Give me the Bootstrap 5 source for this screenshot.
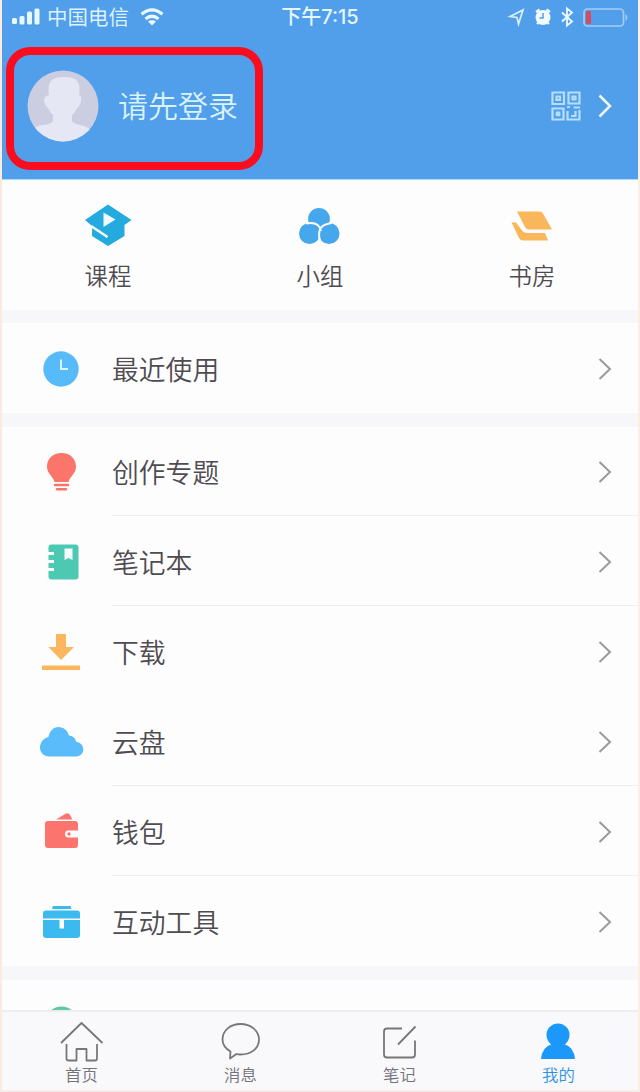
<!DOCTYPE html>
<html lang="zh-CN">
<head>
<meta charset="utf-8">
<meta name="viewport" content="width=device-width, initial-scale=1">
<title>我的</title>
<link href="https://cdn.jsdelivr.net/npm/bootstrap@5.3.0/dist/css/bootstrap.min.css" rel="stylesheet">
<style>
body{font-family:"Liberation Sans","Noto Sans CJK SC",sans-serif;color:#4e4c50;background:#fefdfe}
svg{display:block;flex:none;overflow:visible}
.screen{height:1092px;overflow:hidden;border-left:2px solid #fbeadd;border-right:2px solid #fbefe2;border-bottom:2px solid #f9e9ea}
.hero{height:180px;background:#519eea;color:#fff;border-bottom:1px solid #a9dcf6}
.status{height:33px;font-size:20.5px;line-height:33px}
.status .side{width:270px}
.clock{font-family:"Inter","Noto Sans CJK SC",sans-serif;font-size:20px;font-weight:500;color:#e4f6ff;white-space:nowrap;padding-top:1px}
.carrier{color:#dcf2ff;margin-left:5px;margin-right:11px;padding-top:1px}
.login{width:257px;height:123px;margin:14px 0 0 4px;border:8px solid #fa0d1f;border-radius:24px;padding:0 0 5px 13px}
.login-name{font-size:30px;font-weight:350;color:#d9f3ff;margin-left:19px;line-height:40px;padding-top:2px}
.quick{height:130px}
.quick-item{padding-top:22px;font-size:23.4px;font-weight:350}
.quick-item span{line-height:30px;margin-top:12px}
.band{background:#f7f6f9}
.line-item{height:90px;padding:2px 26px 0 35px;font-size:26.8px;font-weight:350}
.line-body{margin-left:27px;padding-top:5px}
.rule{height:1px;margin:-1px 0 0 110px;background:#eeedf1}
.peek{height:30px;overflow:hidden;padding:26px 0 0 48px}
.tabs{height:82px;background:#f9f8fb;border-top:2px solid #ededf0;font-size:16.4px;font-weight:350;color:#737277}
.tabs .tab-item{padding-top:8px}
.tabs span{line-height:22px}
.tabs .on{color:#2b93e4}
</style>
</head>
<body>
<div class="screen d-flex flex-column">
  <header class="hero flex-shrink-0">
    <div class="status d-flex justify-content-between">
      <div class="side d-flex align-items-center">
        <svg class="ms-2 ps-0" width="32" height="20" viewBox="0 0 32 20" fill="#e8f8ff"><rect x="2" y="11" width="5" height="6" rx="1.5"/><rect x="9.500" y="9" width="5" height="8.500" rx="1.500"/><rect x="17" y="4.500" width="5" height="13" rx="1.500"/><rect x="24.500" y="1.500" width="5" height="16" rx="1.500"/></svg>
        <span class="carrier">中国电信</span>
        <svg width="24" height="18" viewBox="0 0 24 18" fill="none" stroke="#e8f8ff" stroke-width="3.200"><path d="M1.500 6.300Q12-2.500 22.500 6.300M5.500 11Q12 5.500 18.500 11"/><path d="M8 13.500Q12 10.500 16 13.500L12 17.500Z" fill="#e8f8ff" stroke="none"/></svg>
      </div>
      <div class="clock">下午7:15</div>
      <div class="side d-flex align-items-center justify-content-end pe-2">
        <svg width="122" height="22" viewBox="0 0 122 22" fill="none" stroke="#cdeaff" stroke-width="1.700"><path d="M2 10.500 15 4 10.500 18 9 11.500Z" stroke="#d9f1ff"/><circle cx="35" cy="11.500" r="7.500" fill="#f0faff" stroke="none"/><path d="M28 6 31.500 3.500M42 6 38.500 3.500M30.500 16.500l-1.500 1.500M39.500 16.500l1.500 1.500" stroke="#eefaff" stroke-width="2.300"/><path d="M35 7V12H31.500" stroke="#519eea" stroke-width="1.500"/><path d="M54 6.500 64 15.500 59 19.500V2.500L64 6.500 54 15.500" stroke="#e8f8ff" stroke-width="1.900"/><rect x="76" y="3" width="39.500" height="17" rx="3.500" stroke="#a6ccf3"/><rect x="78" y="5" width="5" height="13" rx="1.500" fill="#d54b62" stroke="none"/><path d="M117.500 8q4 3.500 0 7Z" fill="#a6ccf3" stroke="none"/></svg>
      </div>
    </div>
    <div class="d-flex justify-content-between">
      <div class="login d-flex align-items-center">
        <svg width="72" height="72" viewBox="0 0 72 72"><clipPath id="face"><circle cx="36" cy="36" r="35.500"/></clipPath><g clip-path="url(#face)"><path fill="#cacee0" d="M0 0h72v72H0z"/><path fill="#e5e8f4" d="M22 25Q20 13 26 9 31 7 37 7T48 9Q54 13 52 25q3 1 2 6-1 5-4 7-2 5-5 7v6q2 3 9 4 8 2 13 8v11H4V61q4-5 12-6 8-1 10-4v-6q-3-2-5-7-3-2-4-7 0-5 5-6z"/></g></svg>
        <span class="login-name">请先登录</span>
      </div>
      <div class="d-flex align-items-center" style="padding:8px 26px 0 0">
        <svg width="30" height="30" viewBox="0 0 30 30" fill="none" stroke="#b6dffb" stroke-width="2.200"><path d="M1.500 1.500h11.500v11.500h-11.500zM17.500 1.500h11v11h-11zM1.500 17.500h11v11h-11z"/><path d="M5.500 5.500h3.500v3.500H5.500zM21.500 5.500h3v3h-3zM5.800 21.700h2.500v2.500H5.800z"/><path d="M16 16h3M22.500 16.500h6.500M16.500 20v8.500h12V19M20 25h4.500v-5"/></svg>
        <svg style="margin-left:17px" width="14" height="24" viewBox="0 0 14 24" fill="none" stroke="#eefaff" stroke-width="2.500"><path d="M1.500 1.500 12 12 1.500 22.500"/></svg>
      </div>
    </div>
  </header>

  <section class="quick row g-0 flex-shrink-0">
    <div class="quick-item col d-flex flex-column align-items-center">
      <svg width="48" height="48" viewBox="0 0 48 48"><path fill="#24aade" d="M24 2.500 47.500 18 40.500 23V34L24 44 8 34V24L1 18z"/><path d="M7 24 23.500 35" stroke="#fff" stroke-width="2.500"/><path fill="#effaff" d="M19.500 10.500 31.500 17.500 19.500 25z"/></svg>
      <span>课程</span>
    </div>
    <div class="quick-item col d-flex flex-column align-items-center">
      <svg width="48" height="48" viewBox="0 0 48 48" fill="#46a7ed"><circle cx="13.500" cy="31.500" r="10.500"/><circle cx="33" cy="31.500" r="10.500"/><circle cx="23" cy="17" r="10.900"/><path fill="none" stroke="#fff" stroke-width="2" d="M10 21.500Q23 19 25 29M35.500 21Q24.500 22.500 23.500 29 22 36 25.500 41"/></svg>
      <span>小组</span>
    </div>
    <div class="quick-item col d-flex flex-column align-items-center">
      <svg width="48" height="48" viewBox="0 0 48 48" fill="#fab65b"><path d="M9 9.500H31.500Q34 9.500 35 11.500L44 27.500H21Q18.500 27.500 17 25ZM3.500 20.500H8L14.500 29Q16 31 19 31H37L40 38.500H15Q12.500 38.500 11 36Z"/></svg>
      <span>书房</span>
    </div>
  </section>

  <div class="band flex-shrink-0" style="height:13px"></div>
  <div class="line-item d-flex align-items-center flex-shrink-0">
    <svg width="48" height="48" viewBox="0 0 48 48"><circle cx="24" cy="24" r="17.700" fill="#56bbf8"/><path d="M24 14.500V24H31" fill="none" stroke="#d8f4ff" stroke-width="2"/></svg>
    <span class="line-body flex-grow-1">最近使用</span>
    <svg width="14" height="24" viewBox="0 0 14 24" fill="none" stroke="#9a999d" stroke-width="2"><path d="M1.500 2 12 12 1.500 22"/></svg>
  </div>
  <div class="band flex-shrink-0" style="height:14px"></div>

  <main class="flex-shrink-0">
    <div class="line-item d-flex align-items-center pt-0" style="height:89px">
      <svg width="48" height="48" viewBox="0 0 48 48" fill="#fb756b"><path d="M24.500 5C15.500 5 10 11 10 18.500 10 26 16 28 17.500 34H31.500C33 28 39 26 39 18.500 39 11 33.500 5 24.500 5Z"/><path d="M18 37H31M20 41.300H29" stroke="#fb756b" stroke-width="2.500" stroke-linecap="round"/></svg>
      <span class="line-body flex-grow-1">创作专题</span>
      <svg width="14" height="24" viewBox="0 0 14 24" fill="none" stroke="#9a999d" stroke-width="2"><path d="M1.500 2 12 12 1.500 22"/></svg>
    </div>
    <div class="rule"></div>
    <div class="line-item d-flex align-items-center">
      <svg width="48" height="48" viewBox="0 0 48 48"><rect x="11.500" y="6.500" width="30" height="35" rx="3" fill="#4bc9b3"/><path d="M10 15.500h7M10 23.500h7M10 31.500h7" stroke="#fff" stroke-width="3"/><path fill="#f6fffc" d="M27.500 10.500h8V22l-4-2-4 2z"/></svg>
      <span class="line-body flex-grow-1">笔记本</span>
      <svg width="14" height="24" viewBox="0 0 14 24" fill="none" stroke="#9a999d" stroke-width="2"><path d="M1.500 2 12 12 1.500 22"/></svg>
    </div>
    <div class="rule"></div>
    <div class="line-item d-flex align-items-center">
      <svg width="48" height="48" viewBox="0 0 48 48" fill="#fcb75e"><path d="M19 6H29V19H37L24 32 11.500 19H19ZM5 37.500H43V42H5Z"/></svg>
      <span class="line-body flex-grow-1">下载</span>
      <svg width="14" height="24" viewBox="0 0 14 24" fill="none" stroke="#9a999d" stroke-width="2"><path d="M1.500 2 12 12 1.500 22"/></svg>
    </div>
    <div class="line-item d-flex align-items-center">
      <svg width="48" height="48" viewBox="0 0 48 48" fill="#5abcfa"><path d="M12 38.500C7 38.500 3 34.500 3 29.500 3 24 7 20 11.500 19 12.500 13 16.500 9 21.500 9 26.500 9 30.500 12.500 32 17.500Q37.500 17.500 39.500 24C43.500 24.500 46.300 27.500 46.300 31.500 46.300 35.500 43 38.500 39 38.500Z"/></svg>
      <span class="line-body flex-grow-1">云盘</span>
      <svg width="14" height="24" viewBox="0 0 14 24" fill="none" stroke="#9a999d" stroke-width="2"><path d="M1.500 2 12 12 1.500 22"/></svg>
    </div>
    <div class="rule"></div>
    <div class="line-item d-flex align-items-center">
      <svg width="48" height="48" viewBox="0 0 48 48" fill="#fb756e"><path d="M19 11.500 29 5.500Q32 4.500 33 7L35.500 11.500Z"/><path d="M11 13H38Q41 13 41 16V22.500H31.500A3.500 3.500 0 0 0 31.500 29.500H41V37Q41 40 38 40H11Q8 40 8 37V16Q8 13 11 13Z"/><circle cx="32" cy="26" r="1.700"/></svg>
      <span class="line-body flex-grow-1">钱包</span>
      <svg width="14" height="24" viewBox="0 0 14 24" fill="none" stroke="#9a999d" stroke-width="2"><path d="M1.500 2 12 12 1.500 22"/></svg>
    </div>
    <div class="rule"></div>
    <div class="line-item d-flex align-items-center">
      <svg width="48" height="48" viewBox="0 0 48 48" fill="#3bbaef"><path d="M16 8H33.500L34.500 11H15Z"/><path d="M9 12.500H40Q43 12.500 43 15.500V20.500H6V15.500Q6 12.500 9 12.500ZM6 22H22.500V30.500H27V22H43V37Q43 40 40 40H9Q6 40 6 37Z"/></svg>
      <span class="line-body flex-grow-1">互动工具</span>
      <svg width="14" height="24" viewBox="0 0 14 24" fill="none" stroke="#9a999d" stroke-width="2"><path d="M1.500 2 12 12 1.500 22"/></svg>
    </div>
  </main>
  <div class="band flex-shrink-0" style="height:14px"></div>
  <div class="peek flex-shrink-0"><svg width="24" height="24" viewBox="0 0 24 24"><circle cx="11.500" cy="17" r="16.500" fill="#5cc9a0"/></svg></div>

  <nav class="tabs row g-0 flex-shrink-0" aria-label="主导航">
    <div class="tab-item col d-flex flex-column align-items-center">
      <svg width="44" height="44" viewBox="0 0 44 44" fill="none" stroke="#77767b" stroke-width="1.800" stroke-linejoin="round"><path d="M1 23 21.500 3 42.500 23M6.500 24V38.500Q6.500 40.500 8.500 40.500H16.500V29H26.500V40.500H35Q37 40.500 37 38.500V24"/></svg>
      <span>首页</span>
    </div>
    <div class="tab-item col d-flex flex-column align-items-center">
      <svg width="44" height="44" viewBox="0 0 44 44" fill="none" stroke="#77767b" stroke-width="1.800" stroke-linejoin="round"><path d="M11.500 31.500C6.500 28.500 3.500 24.500 3.500 19.500 3.500 10.500 11.500 4 21.500 4S40 10.500 40 19.500 32 34.500 21.500 34.500Q19 34.500 17.500 34L11 38.500Z"/></svg>
      <span>消息</span>
    </div>
    <div class="tab-item col d-flex flex-column align-items-center">
      <svg width="44" height="44" viewBox="0 0 44 44" fill="none" stroke="#77767b" stroke-width="1.800"><path d="M24 8.500H9Q6 8.500 6 11.500V34.500Q6 37.500 9 37.500H34Q37 37.500 37 34.500V20.500M20 24.500 37.500 6.500"/></svg>
      <span>笔记</span>
    </div>
    <div class="tab-item on col d-flex flex-column align-items-center">
      <svg width="44" height="44" viewBox="0 0 44 44" fill="#1c98fb"><circle cx="21" cy="15" r="11.500"/><path d="M15 24H27Q37 27 38 39H4Q5 27 15 24Z"/></svg>
      <span>我的</span>
    </div>
  </nav>
</div>
<script src="https://cdn.jsdelivr.net/npm/bootstrap@5.3.0/dist/js/bootstrap.bundle.min.js"></script>
</body>
</html>
